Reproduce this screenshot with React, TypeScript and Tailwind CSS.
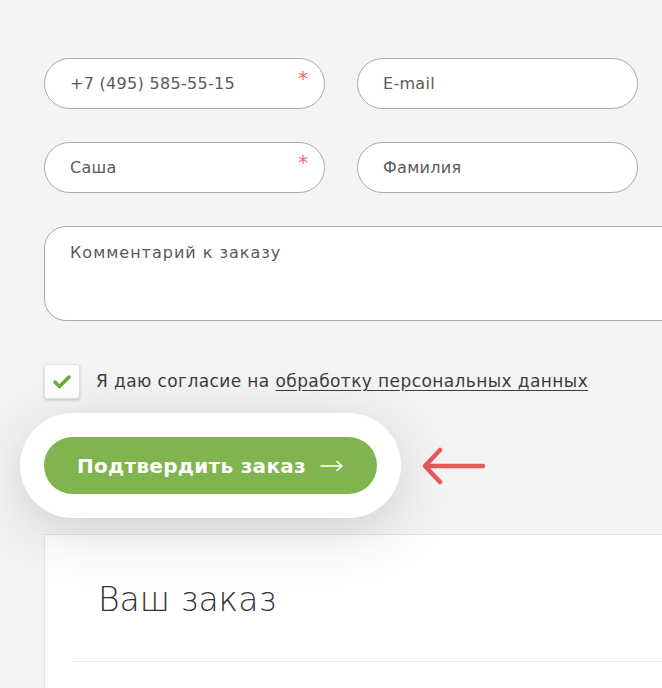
import React from "react";

const font = { fontFamily: '"DejaVu Sans", "Noto Sans", sans-serif' };

function Field({ placeholder, required }: { placeholder: string; required?: boolean }) {
  return (
    <div className="relative h-[51px] w-[281px] rounded-full border border-[#a9a9a9] bg-white flex items-center pl-[25px]">
      <span className="text-[16px] tracking-[0.3px] text-[#5a5a5a]">{placeholder}</span>
      {required && (
        <span className="absolute right-[16px] top-[9px] text-[20px] leading-none text-[#f06a6a]">*</span>
      )}
    </div>
  );
}

export default function App() {
  return (
    <div className="w-[662px] h-[688px] overflow-hidden bg-[#f4f4f4]" style={font}>
      <div className="pl-[44px] pt-[58px]">
        <div className="grid grid-cols-[281px_281px] gap-x-[32px] gap-y-[33px]">
          <Field placeholder="+7 (495) 585-55-15" required />
          <Field placeholder="E-mail" />
          <Field placeholder="Саша" required />
          <Field placeholder="Фамилия" />
        </div>
        <div className="mt-[33px] h-[95px] w-[700px] rounded-[22px] border border-[#a9a9a9] bg-white pl-[25px] pt-[14px]">
          <span className="text-[16px] tracking-[1px] text-[#5a5a5a]">Комментарий к заказу</span>
        </div>
        <div className="mt-[43px] flex items-center">
          <div className="flex h-[35px] w-[36px] items-center justify-center rounded-[3px] border border-[#e2e2e2] bg-white shadow-[0_1px_3px_rgba(0,0,0,0.2)]">
            <svg width="20" height="15" viewBox="0 0 20 15">
              <path d="M3 8l4.5 4.5L17 3" fill="none" stroke="#6aaa3a" strokeWidth="3.5" strokeLinecap="round" strokeLinejoin="round" />
            </svg>
          </div>
          <span className="ml-[16px] text-[17px] tracking-[0.4px] text-[#3c3c3c]">
            Я даю согласие на <span className="underline underline-offset-[3px]">обработку персональных данных</span>
          </span>
        </div>
      </div>
      <div className="mt-[14px] flex items-center pl-[20px]">
        <div className="relative z-10 rounded-full bg-white p-[24px] shadow-[0_12px_60px_rgba(0,0,0,0.16)]">
          <div className="flex h-[57px] w-[333px] items-center justify-center rounded-full bg-[#80b44e] text-white">
            <span className="text-[20px] font-bold tracking-[0.3px]">Подтвердить заказ</span>
            <svg className="ml-[14px]" width="24" height="12" viewBox="0 0 24 12">
              <path d="M1 6h21M17 1.5l5 4.5-5 4.5" fill="none" stroke="white" strokeWidth="1.6" strokeLinecap="round" strokeLinejoin="round" />
            </svg>
          </div>
        </div>
        <svg className="ml-[19px]" width="66" height="44" viewBox="0 0 66 44">
          <path d="M63 22H5M20 6L5 22l15 16" fill="none" stroke="#e85858" strokeWidth="4.5" strokeLinecap="round" strokeLinejoin="round" />
        </svg>
      </div>
      <div className="ml-[44px] mt-[16px] h-[200px] border-t border-l border-[#e4e4e4] bg-white">
        <div className="pl-[53px] pt-[43px] pb-[39px]">
          <h2 className="text-[33px] font-extralight leading-[44px] text-[#333]">Ваш заказ</h2>
        </div>
        <div className="ml-[28px] h-px bg-[#e6e6e6]" />
      </div>
    </div>
  );
}
